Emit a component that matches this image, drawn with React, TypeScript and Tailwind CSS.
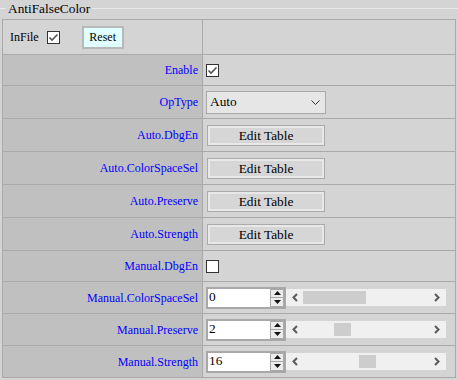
import React from "react";

const LABEL_CELL = "w-[200px] shrink-0 bg-[#c0c0c0] border-r border-[#a9a9a9] flex items-center justify-end pr-[4px] text-[12px] text-[#0000ff]";

function CheckBox({ checked }: { checked: boolean }) {
  return (
    <span className="w-[13px] h-[13px] border border-[#333] bg-white flex items-center justify-center">
      {checked && (
        <svg width="11" height="11" viewBox="0 0 11 11">
          <path d="M1.5 5.5 L4 8 L9.5 2.5" fill="none" stroke="#555" strokeWidth="1.6" />
        </svg>
      )}
    </span>
  );
}

function EditButton() {
  return (
    <button className="w-[118px] h-[21px] border border-[#aaaaaa] bg-[#d6d6d6] shadow-[inset_0_0_0_2px_#e8e8e8] text-[13.33px] text-black leading-none">
      Edit Table
    </button>
  );
}

function Chevron({ dir }: { dir: "left" | "right" }) {
  return (
    <svg width="6" height="9" viewBox="0 0 6 9">
      <path
        d={dir === "left" ? "M5 1 L1.5 4.5 L5 8" : "M1 1 L4.5 4.5 L1 8"}
        fill="none"
        stroke="#5a5a5a"
        strokeWidth="2"
      />
    </svg>
  );
}

function NumberSlider({ value, thumbLeft, thumbWidth }: { value: string; thumbLeft: number; thumbWidth: number }) {
  return (
    <div className="flex items-center">
      <div className="w-[80px] h-[22px] border-2 border-[#a8a8a8] bg-white flex">
        <span className="flex-1 pl-[1px] text-[13.33px] leading-[16px] text-black">{value}</span>
        <div className="w-[14px] flex flex-col">
          <span className="flex-1 bg-[#ececec] border border-[#a8a8a8] flex items-center justify-center">
            <svg width="7" height="4" viewBox="0 0 7 4"><path d="M0 4 L3.5 0 L7 4 Z" fill="#111" /></svg>
          </span>
          <span className="flex-1 bg-[#ececec] border border-t-0 border-[#a8a8a8] flex items-center justify-center">
            <svg width="7" height="4" viewBox="0 0 7 4"><path d="M0 0 L3.5 4 L7 0 Z" fill="#111" /></svg>
          </span>
        </div>
      </div>
      <div className="w-[160px] h-[17px] bg-[#f0f0f0] flex items-center relative">
        <span className="absolute left-[6px] top-[4px] flex"><Chevron dir="left" /></span>
        <span
          className="h-[13px] bg-[#cdcdcd]"
          style={{ marginLeft: thumbLeft, width: thumbWidth }}
        />
        <span className="absolute right-[6px] top-[4px] flex"><Chevron dir="right" /></span>
      </div>
    </div>
  );
}

function Row({ label, h, children }: { label: string; h: string; children?: React.ReactNode }) {
  return (
    <div className={`flex border-t border-[#a9a9a9] ${h}`}>
      <div className={LABEL_CELL}>{label}</div>
      <div className="flex-1 flex items-center pl-[3px]">{children}</div>
    </div>
  );
}

export default function App() {
  return (
    <div className="w-[458px] h-[380px] bg-[#d4d4d4] [font-family:'Liberation_Serif',serif] text-black overflow-hidden">
      {/* legend */}
      <div className="h-[19px] flex items-start">
        <span className="w-[6px] mt-[8px] border-t border-[#e8e8e8]" />
        <span className="px-[2px] text-[13.33px] leading-[17px]">AntiFalseColor</span>
        <span className="flex-1 mt-[8px] border-t border-[#e8e8e8]" />
      </div>

      <div className="ml-[2px] w-[454px] border border-t-0 border-[#a9a9a9]">
        <div className="flex border-t border-[#a9a9a9] h-[35px]">
          <div className="w-[200px] shrink-0 border-r border-[#a9a9a9] flex items-center text-[12px]">
            <span className="ml-[7px]">InFile</span>
            <span className="ml-[8px]"><CheckBox checked /></span>
            <button className="ml-[22px] w-[42px] h-[23px] border-2 border-[#b8b8b8] bg-[#e0ffff] text-[12px] leading-none">
              Reset
            </button>
          </div>
          <div className="flex-1" />
        </div>

        <Row label="Enable" h="h-[31px]"><CheckBox checked /></Row>
        <Row label="OpType" h="h-[33px]">
          <div className="w-[120px] h-[23px] border border-[#a9a9a9] bg-[#e6e6e6] flex items-center justify-between pl-[3px] pr-[5px] text-[13.33px]">
            <span>Auto</span>
            <svg width="9" height="5" viewBox="0 0 9 5"><path d="M0.5 0.5 L4.5 4.5 L8.5 0.5" fill="none" stroke="#333" strokeWidth="1" /></svg>
          </div>
        </Row>
        <Row label="Auto.DbgEn" h="h-[33px]"><span className="ml-[1px]"><EditButton /></span></Row>
        <Row label="Auto.ColorSpaceSel" h="h-[33px]"><span className="ml-[1px]"><EditButton /></span></Row>
        <Row label="Auto.Preserve" h="h-[33px]"><span className="ml-[1px]"><EditButton /></span></Row>
        <Row label="Auto.Strength" h="h-[33px]"><span className="ml-[1px]"><EditButton /></span></Row>
        <Row label="Manual.DbgEn" h="h-[31px]"><CheckBox checked={false} /></Row>
        <Row label="Manual.ColorSpaceSel" h="h-[32px]"><NumberSlider value="0" thumbLeft={17} thumbWidth={63} /></Row>
        <Row label="Manual.Preserve" h="h-[32px]"><NumberSlider value="2" thumbLeft={48} thumbWidth={17} /></Row>
        <Row label="Manual.Strength" h="h-[32px]"><NumberSlider value="16" thumbLeft={73} thumbWidth={17} /></Row>
      </div>
    </div>
  );
}
